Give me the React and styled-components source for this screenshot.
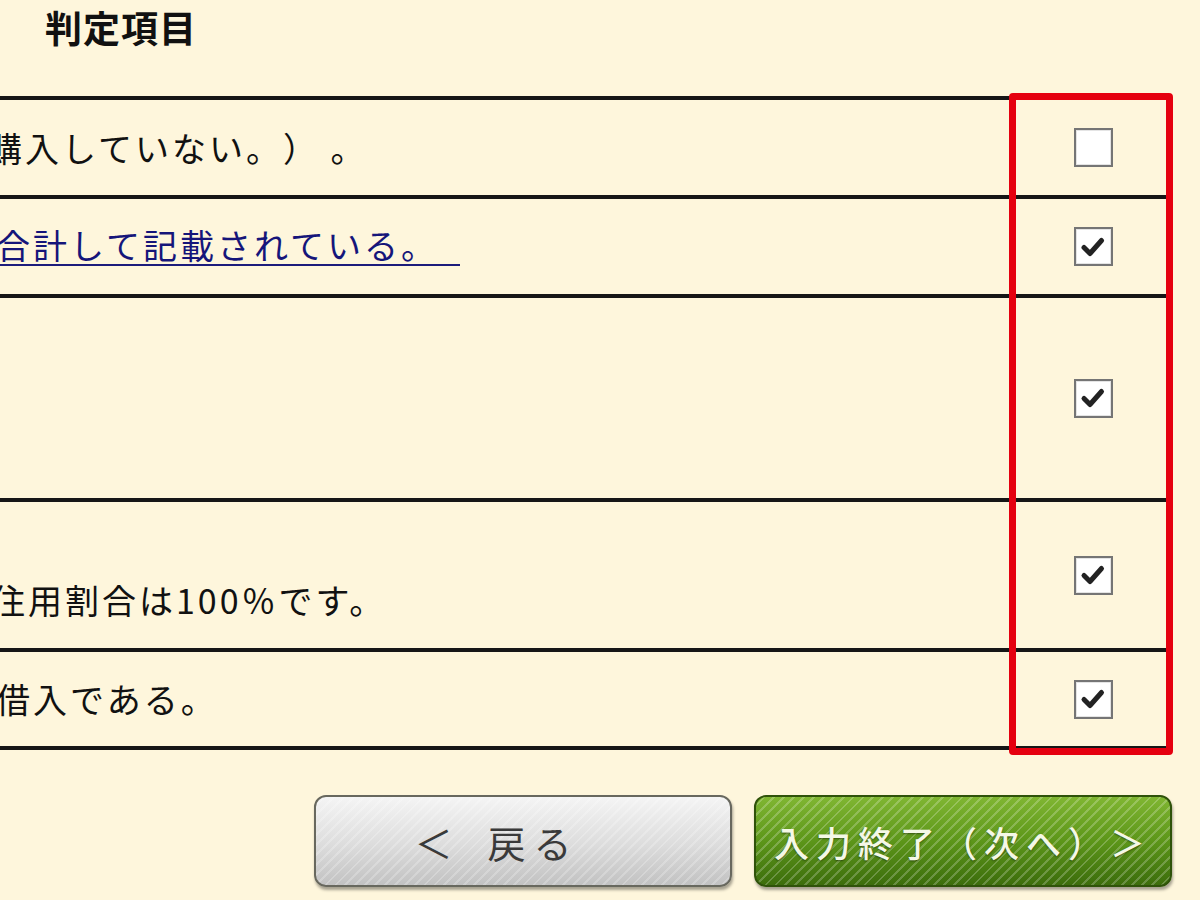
import React from 'react';
import styled, { createGlobalStyle, css } from 'styled-components';

const GlobalStyle = createGlobalStyle`
  html, body {
    margin: 0;
    padding: 0;
    background: #fef6dc;
  }
  body {
    font-family: "Noto Sans CJK JP", "Noto Sans", sans-serif;
    color: #111;
    text-spacing-trim: space-all;
  }
`;

const Page = styled.div`
  width: 1200px;
  height: 900px;
  overflow: hidden;
`;

const Heading = styled.h2`
  margin: 0;
  height: 96px;
  box-sizing: border-box;
  padding: 3px 0 0 45px;
  font-size: 37px;
  font-weight: 700;
  line-height: 48px;
  letter-spacing: 1px;
  color: #111;
`;

const Table = styled.div`
  position: relative;
  width: 1166px;
  border-top: 4px solid #161616;
`;

const Row = styled.div`
  display: grid;
  grid-template-columns: 1fr 146px;
  height: ${p => p.$h}px;
  box-sizing: border-box;
  border-bottom: 4px solid #161616;
`;

const TextCell = styled.div`
  display: flex;
  align-items: ${p => (p.$bottom ? 'flex-end' : 'center')};
  padding-bottom: ${p => (p.$bottom ? '26px' : '0')};
  overflow: hidden;
  white-space: nowrap;
  font-size: 34px;
  line-height: 44px;
  letter-spacing: 3px;
`;

const Text = styled.span`
  margin-left: ${p => p.$shift}px;
`;

const Link = styled.a`
  margin-left: ${p => p.$shift}px;
  display: inline-block;
  line-height: 1;
  padding: 0 22px 2px 0;
  color: #15157a;
  text-decoration: none;
  border-bottom: 2px solid #1c1c7c;
  cursor: pointer;
`;

const CheckCell = styled.div`
  display: flex;
  align-items: center;
  justify-content: center;
`;

const Box = styled.span`
  width: 39px;
  height: 39px;
  box-sizing: border-box;
  border: 2px solid #757575;
  box-shadow: inset 0 0 0 1px #e4e4e4;
  background: #fff;
  display: flex;
  align-items: center;
  justify-content: center;
`;

const Highlight = styled.div`
  position: absolute;
  left: 1009px;
  top: -7px;
  width: 164px;
  height: 662px;
  box-sizing: border-box;
  border: 7px solid #e5000f;
  border-radius: 4px;
  pointer-events: none;
`;

const Actions = styled.div`
  display: flex;
  justify-content: flex-end;
  gap: 22px;
  margin-top: 45px;
  padding-right: 28px;
`;

const stripes = 'repeating-linear-gradient(135deg, rgba(255,255,255,0) 0 5px, rgba(255,255,255,0.22) 5px 7px)';

const Button = styled.button`
  width: 418px;
  height: 92px;
  padding: 0;
  border-radius: 12px;
  box-sizing: border-box;
  font-family: "Noto Sans CJK JP", "Noto Sans", sans-serif;
  white-space: nowrap;
  display: flex;
  align-items: center;
  justify-content: center;
  cursor: pointer;
  box-shadow: 1px 3px 3px rgba(0, 0, 0, 0.35);

  ${p =>
    p.$primary
      ? css`
          font-size: 35px;
          letter-spacing: 7px;
          color: #f4f8e6;
          font-weight: 500;
          text-shadow: 0 1px 2px rgba(0, 0, 0, 0.45);
          border: 2px solid #2f520a;
          background: ${stripes}, linear-gradient(#80b632, #5c9619 50%, #3c6d0c);
        `
      : css`
          font-size: 38px;
          letter-spacing: 8px;
          padding-right: 52px;
          color: #3a3a3a;
          border: 2px solid #68685e;
          background: ${stripes}, linear-gradient(#f4f4f4, #dcdcdc 55%, #c2c2c2);
        `}
`;

const Check = () => (
  <svg width="30" height="30" viewBox="0 0 30 30">
    <path d="M6 15.5 L12 21.5 L23.5 8.5" fill="none" stroke="#222" strokeWidth="5" strokeLinecap="round" strokeLinejoin="round" />
  </svg>
);

const rows = [
  { h: 99, text: '購入していない。） 。', shift: -12, checked: false },
  { h: 99, text: '合計して記載されている。', shift: -4, checked: true, link: true },
  { h: 204, text: '', shift: 0, checked: true },
  { h: 150, text: '住用割合は100％です。', shift: -9, checked: true, bottom: true },
  { h: 98, text: '借入である。', shift: -4, checked: true },
];

export default function App() {
  return (
    <Page>
      <GlobalStyle />
      <Heading>判定項目</Heading>
      <Table>
        {rows.map((r, i) => (
          <Row key={i} $h={r.h}>
            <TextCell $bottom={r.bottom}>
              {r.link ? <Link $shift={r.shift}>{r.text}</Link> : <Text $shift={r.shift}>{r.text}</Text>}
            </TextCell>
            <CheckCell>
              <Box>{r.checked && <Check />}</Box>
            </CheckCell>
          </Row>
        ))}
        <Highlight />
      </Table>
      <Actions>
        <Button>＜&ensp;戻る</Button>
        <Button $primary>入力終了（次へ）＞</Button>
      </Actions>
    </Page>
  );
}
